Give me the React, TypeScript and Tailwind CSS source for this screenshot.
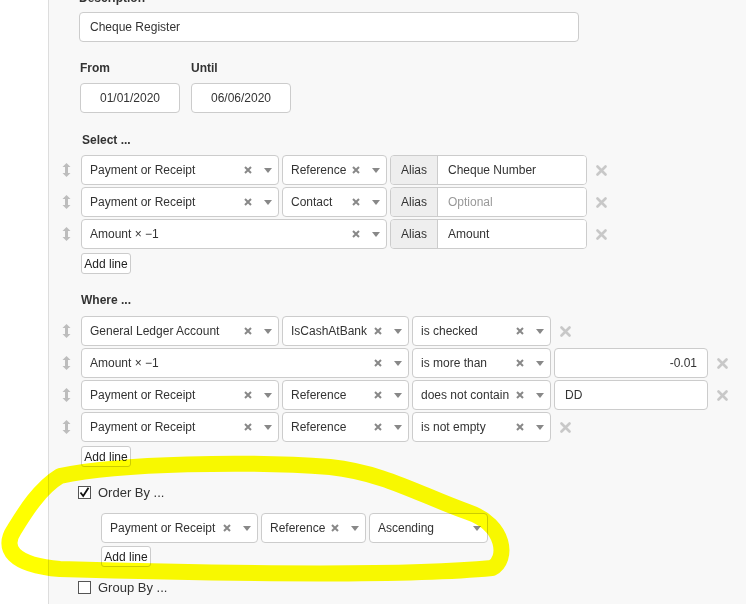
import React from "react";

const font = { fontFamily: '"Liberation Sans", Arial, sans-serif' };

const Handle = () => (
  <div className="w-[22px] h-[30px] flex items-center pl-[3px]">
    <svg width="9" height="14" viewBox="0 0 9 14">
      <path d="M4.5 0 L8.5 4 L6 4 L6 10 L8.5 10 L4.5 14 L0.5 10 L3 10 L3 4 L0.5 4 Z" fill="#bdbdbd" />
    </svg>
  </div>
);

const RemoveX = () => (
  <svg width="11" height="11" viewBox="0 0 11 11" className="ml-[9px] shrink-0">
    <path d="M1.5 1.5 L9.5 9.5 M9.5 1.5 L1.5 9.5" stroke="#c8c8c8" strokeWidth="2.6" strokeLinecap="round" />
  </svg>
);

const Sel: React.FC<{ w: string; text: string; clear?: boolean }> = ({ w, text, clear = true }) => (
  <div
    className={`${w} h-[30px] shrink-0 border border-[#cccccc] rounded-[4px] bg-white flex items-center pl-[8px] pr-[6px] text-[12px] text-[#333]`}
  >
    <span className="flex-1 truncate">{text}</span>
    {clear && (
      <svg width="10" height="10" viewBox="0 0 10 10" className="shrink-0">
        <path d="M2 2 L8 8 M8 2 L2 8" stroke="#888" strokeWidth="2" />
      </svg>
    )}
    <svg width="8" height="5" viewBox="0 0 8 5" className="ml-[11px] shrink-0">
      <path d="M0 0 L8 0 L4 5 Z" fill="#888" />
    </svg>
  </div>
);

const Alias: React.FC<{ value: string; placeholder?: boolean }> = ({ value, placeholder }) => (
  <div className="w-[197px] h-[30px] flex border border-[#cccccc] rounded-[4px] overflow-hidden text-[12px] shrink-0">
    <div className="w-[47px] bg-[#eeeeee] border-r border-[#cccccc] flex items-center justify-center text-[#333]">
      Alias
    </div>
    <div className={`flex-1 bg-white flex items-center pl-[10px] ${placeholder ? "text-[#999]" : "text-[#333]"}`}>
      {value}
    </div>
  </div>
);

const AddLine: React.FC<{ className?: string }> = ({ className = "" }) => (
  <div className={`flex ${className}`}>
    <button className="w-[50px] h-[21px] border border-[#cccccc] rounded-[3px] bg-white text-[12px] text-[#222] leading-none">
      Add line
    </button>
  </div>
);

const Check: React.FC<{ checked?: boolean }> = ({ checked }) => (
  <div className="w-[13px] h-[13px] border border-[#555] bg-white flex items-center justify-center">
    {checked && (
      <svg width="11" height="11" viewBox="0 0 11 11">
        <path d="M1.5 5.5 L4.2 9 L9.5 0.8" stroke="#111" strokeWidth="1.8" fill="none" />
      </svg>
    )}
  </div>
);

export default function App() {
  return (
    <div className="relative w-[746px] h-[604px] overflow-hidden flex bg-white" style={font}>
      <div className="w-[48px] shrink-0 bg-white" />
      <div className="flex-1 border-l border-[#dddddd] bg-[#f8f8f8] pl-[30px]">
        <div className="-mt-[9px] text-[12px] font-bold text-[#333] leading-[15px]">Description</div>
        <div className="mt-[6px] w-[500px] h-[30px] border border-[#cccccc] rounded-[4px] bg-white flex items-center pl-[10px] text-[12px] text-[#333]">
          Cheque Register
        </div>

        <div className="flex gap-[11px] mt-[19px] ml-px">
          {[
            ["From", "01/01/2020"],
            ["Until", "06/06/2020"],
          ].map(([l, v]) => (
            <div key={l}>
              <div className="text-[12px] font-bold text-[#333] leading-[15px]">{l}</div>
              <div className="mt-[7px] w-[100px] h-[30px] border border-[#cccccc] rounded-[4px] bg-white flex items-center justify-center text-[12px] text-[#333]">
                {v}
              </div>
            </div>
          ))}
        </div>

        <div className="mt-[20px] ml-[3px] text-[12px] font-bold text-[#333] leading-[15px]">Select ...</div>
        <div className="mt-[7px] -ml-[20px] flex flex-col gap-[2px]">
          <div className="flex items-center">
            <Handle />
            <div className="flex gap-[3px]">
              <Sel w="w-[198px]" text="Payment or Receipt" />
              <Sel w="w-[105px]" text="Reference" />
              <Alias value="Cheque Number" />
            </div>
            <RemoveX />
          </div>
          <div className="flex items-center">
            <Handle />
            <div className="flex gap-[3px]">
              <Sel w="w-[198px]" text="Payment or Receipt" />
              <Sel w="w-[105px]" text="Contact" />
              <Alias value="Optional" placeholder />
            </div>
            <RemoveX />
          </div>
          <div className="flex items-center">
            <Handle />
            <div className="flex gap-[3px]">
              <Sel w="w-[306px]" text="Amount × −1" />
              <Alias value="Amount" />
            </div>
            <RemoveX />
          </div>
        </div>
        <AddLine className="mt-[4px] ml-[2px]" />

        <div className="mt-[19px] ml-[2px] text-[12px] font-bold text-[#333] leading-[15px]">Where ...</div>
        <div className="mt-[8px] -ml-[20px] flex flex-col gap-[2px]">
          <div className="flex items-center">
            <Handle />
            <div className="flex gap-[3px]">
              <Sel w="w-[198px]" text="General Ledger Account" />
              <Sel w="w-[127px]" text="IsCashAtBank" />
              <Sel w="w-[139px]" text="is checked" />
            </div>
            <RemoveX />
          </div>
          <div className="flex items-center">
            <Handle />
            <div className="flex gap-[3px]">
              <Sel w="w-[328px]" text="Amount × −1" />
              <Sel w="w-[139px]" text="is more than" />
              <div className="w-[154px] h-[30px] border border-[#cccccc] rounded-[4px] bg-white flex items-center justify-end pr-[10px] text-[12px] text-[#333]">
                -0.01
              </div>
            </div>
            <RemoveX />
          </div>
          <div className="flex items-center">
            <Handle />
            <div className="flex gap-[3px]">
              <Sel w="w-[198px]" text="Payment or Receipt" />
              <Sel w="w-[127px]" text="Reference" />
              <Sel w="w-[139px]" text="does not contain" />
              <div className="w-[154px] h-[30px] border border-[#cccccc] rounded-[4px] bg-white flex items-center pl-[10px] text-[12px] text-[#333]">
                DD
              </div>
            </div>
            <RemoveX />
          </div>
          <div className="flex items-center">
            <Handle />
            <div className="flex gap-[3px]">
              <Sel w="w-[198px]" text="Payment or Receipt" />
              <Sel w="w-[127px]" text="Reference" />
              <Sel w="w-[139px]" text="is not empty" />
            </div>
            <RemoveX />
          </div>
        </div>
        <AddLine className="mt-[4px] ml-[2px]" />

        <div className="mt-[16px] -ml-px h-[19px] flex items-center gap-[7px]">
          <Check checked />
          <span className="text-[13px] text-[#333]">Order By ...</span>
        </div>
        <div className="mt-[11px] ml-[22px] flex gap-[3px]">
          <Sel w="w-[157px]" text="Payment or Receipt" />
          <Sel w="w-[105px]" text="Reference" />
          <Sel w="w-[119px]" text="Ascending" clear={false} />
        </div>
        <AddLine className="mt-[3px] ml-[22px]" />

        <div className="mt-[11px] -ml-px h-[19px] flex items-center gap-[7px]">
          <Check />
          <span className="text-[13px] text-[#333]">Group By ...</span>
        </div>
      </div>

      <svg
        className="absolute inset-0 pointer-events-none mix-blend-multiply"
        width="746"
        height="604"
        viewBox="0 0 746 604"
      >
        <path
          d="M60 476 C120 463 250 461 330 467 C385 473 420 495 468 512 C506 525 508 560 492 568 C400 577 200 573 60 569 C12 565 2 548 14 530 C25 512 40 488 60 476 Z"
          fill="none"
          stroke="#ffff00"
          strokeWidth="16"
          strokeLinejoin="round"
        />
      </svg>
    </div>
  );
}
